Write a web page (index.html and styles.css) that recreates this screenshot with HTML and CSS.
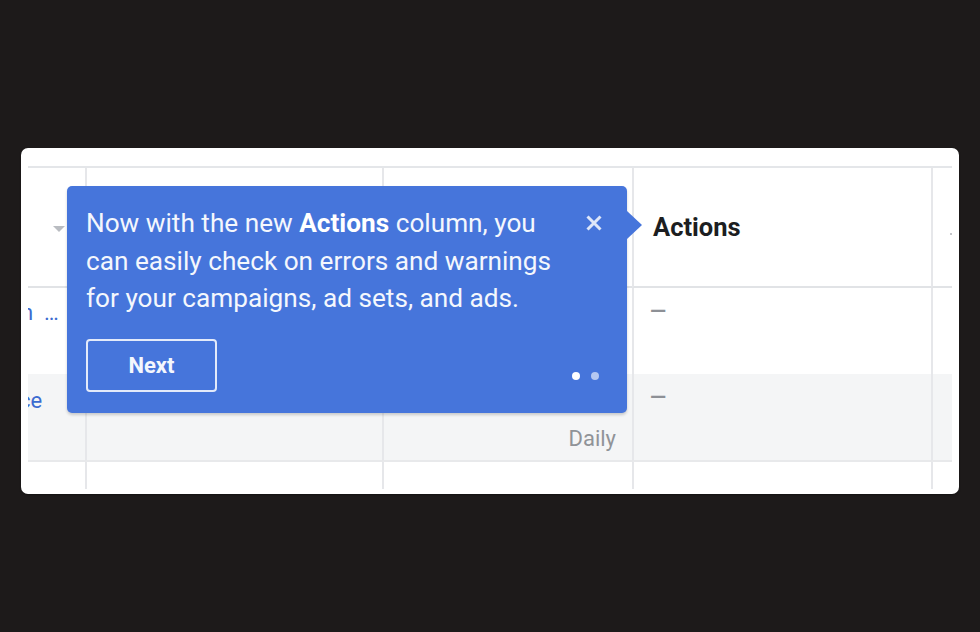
FILE: index.html
```html
<!DOCTYPE html>
<html lang="en">
<head>
<meta charset="utf-8">
<title>Actions column</title>
<link rel="stylesheet" href="styles.css">
</head>
<body>
<div class="card">
  <div class="grid">
    <div class="cell head c0"><span class="caret"></span></div>
    <div class="cell head c1"></div>
    <div class="cell head c2"></div>
    <div class="cell head c3"><span class="title">Actions</span></div>
    <div class="cell head c4"><span class="speck"></span></div>

    <div class="cell r1 c0"><span class="link clip1">n&nbsp;&nbsp;…</span></div>
    <div class="cell r1 c1"></div>
    <div class="cell r1 c2"></div>
    <div class="cell r1 c3"><span class="dash">—</span></div>
    <div class="cell r1 c4"></div>

    <div class="cell r2 alt c0"><span class="link clip2">ce</span></div>
    <div class="cell r2 alt c1"></div>
    <div class="cell r2 alt c2 daily"><span>Daily</span></div>
    <div class="cell r2 alt c3"><span class="dash">—</span></div>
    <div class="cell r2 alt c4"></div>

    <div class="cell r3 c0"></div>
    <div class="cell r3 c1"></div>
    <div class="cell r3 c2"></div>
    <div class="cell r3 c3"></div>
    <div class="cell r3 c4"></div>
  </div>

  <div class="tip">
    <p class="tip-text">Now with the new <b>Actions</b> column, you<br>can easily check on errors and warnings<br>for your campaigns, ad sets, and ads.</p>
    <button class="close" aria-label="Close">
      <svg width="18" height="16" viewBox="0 0 18 16"><path d="M2.5 1.5 L15.5 14.5 M15.5 1.5 L2.5 14.5" stroke="currentColor" stroke-width="3" stroke-linecap="butt"/></svg>
    </button>
    <div class="tip-foot">
      <button class="next">Next</button>
      <div class="dots"><span class="dot on"></span><span class="dot"></span></div>
    </div>
  </div>
</div>
</body>
</html>
```
FILE: styles.css
```css
html, body {
  margin: 0;
  background: #1d1a1a;
  height: 100%;
}
body {
  padding: 148px 0 0 21px;
  box-sizing: border-box;
  font-family: Roboto, "Liberation Sans", Arial, sans-serif;
}
.card {
  position: relative;
  width: 938px;
  height: 346px;
  box-sizing: border-box;
  background: #fff;
  border-radius: 7px;
  padding: 18px 7px 7px 7px;
  box-shadow: 0 1px 2px rgba(0,0,0,0.35);
}
.grid {
  display: grid;
  grid-template-columns: 57px 297px 250px 299px 21px;
  grid-template-rows: 120px 86px 88px 27px;
  border-top: 2px solid #e4e6e9;
  height: 100%;
  box-sizing: border-box;
}
.cell {
  position: relative;
  box-sizing: border-box;
  overflow: hidden;
}
.c1, .c2, .c3, .c4 { border-left: 2px solid #e6e7ea; }
.head { border-bottom: 2px solid #e1e3e6; display: flex; align-items: center; }
.r2 { border-bottom: 2px solid #e8e9eb; }
.alt { background: #f4f5f6; }

.caret {
  margin-left: 25px;
  margin-top: 4px;
  width: 0; height: 0;
  border-left: 6px solid transparent;
  border-right: 6px solid transparent;
  border-top: 6px solid #b9bcc1;
}
.title {
  padding-left: 19px;
  font-size: 25.5px;
  font-weight: 700;
  color: #1c1e21;
}
.speck {
  margin-left: 17px;
  margin-top: 14px;
  width: 2px; height: 2px;
  background: #c4c6ca;
}
.link {
  display: block;
  white-space: nowrap;
  font-size: 22px;
  color: #3b6bd0;
  line-height: 26px;
}
.clip1 { margin: 12px 0 0 -7px; }
.clip2 { margin: 14px 0 0 -9px; }
.dash {
  display: block;
  padding: 9px 0 0 16px;
  font-size: 21px;
  line-height: 28px;
  color: #8d9096;
  font-weight: 700;
}
.daily {
  display: flex;
  justify-content: flex-end;
  align-items: flex-end;
  padding: 0 16px 9px 0;
  font-size: 22px;
  color: #909398;
}

.tip {
  position: absolute;
  left: 46px;
  top: 38px;
  width: 560px;
  height: 227px;
  box-sizing: border-box;
  background: #4675db;
  border-radius: 5px;
  padding: 19px 19px 21px 19px;
  color: #fff;
  box-shadow: 0 2px 3px rgba(0,0,0,0.18);
}
.tip::after {
  content: "";
  position: absolute;
  right: -15px;
  top: 25px;
  width: 0; height: 0;
  border-top: 14px solid transparent;
  border-bottom: 14px solid transparent;
  border-left: 15px solid #4675db;
}
.tip-text {
  margin: 0;
  font-size: 26.2px;
  line-height: 37.5px;
  color: #f4f7fd;
  white-space: nowrap;
}
.tip-text b { font-weight: 700; color: #fff; }
.close {
  position: absolute;
  left: 518px;
  top: 29px;
  width: 18px;
  height: 16px;
  padding: 0;
  border: 0;
  background: none;
  color: rgba(255,255,255,0.82);
  display: flex;
}
.tip-foot {
  display: flex;
  justify-content: space-between;
  align-items: flex-end;
  margin-top: 21px;
}
.next {
  width: 131px;
  height: 53px;
  box-sizing: border-box;
  border: 2px solid rgba(255,255,255,0.85);
  border-radius: 4px;
  background: transparent;
  color: #f4f7fd;
  font-family: Roboto, "Liberation Sans", Arial, sans-serif;
  font-size: 22px;
  font-weight: 700;
  padding: 0;
}
.dots {
  display: flex;
  gap: 11px;
  margin: 0 9px 12px 0;
}
.dot {
  width: 8px;
  height: 8px;
  border-radius: 50%;
  background: rgba(255,255,255,0.6);
}
.dot.on { background: #fff; }
```
